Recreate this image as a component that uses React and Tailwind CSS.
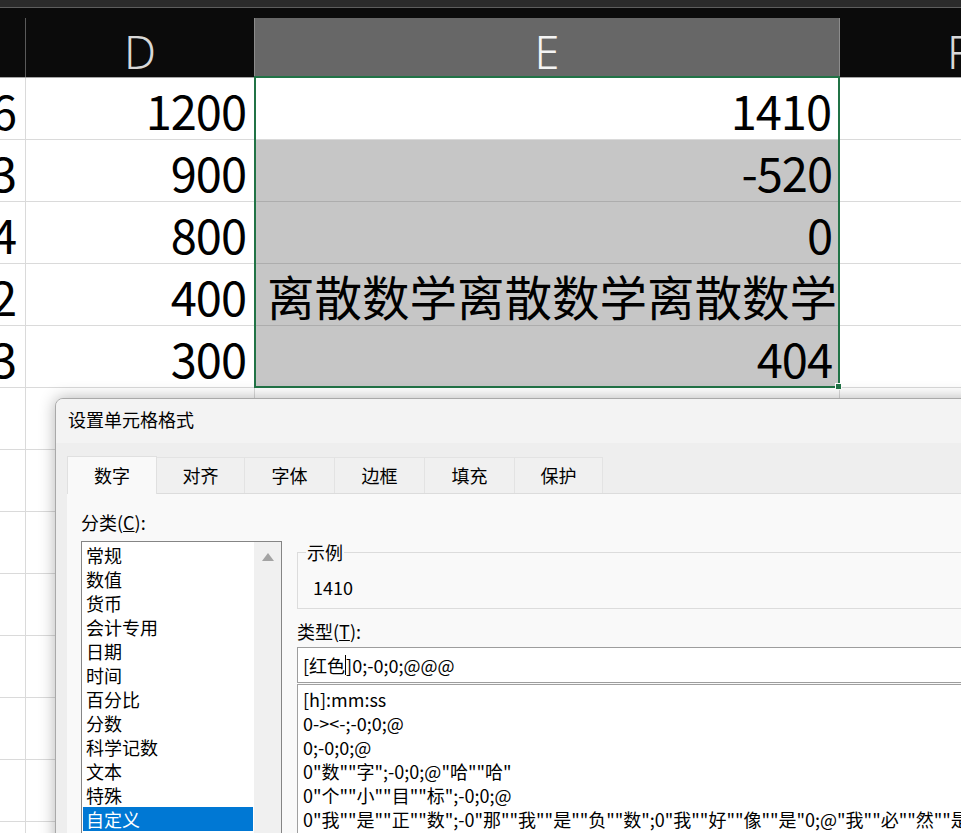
const rows = [
  { c: '6', d: '1200', e: '1410' },
  { c: '3', d: '900', e: '-520' },
  { c: '4', d: '800', e: '0' },
  { c: '2', d: '400', e: '离散数学离散数学离散数学', text: true },
  { c: '3', d: '300', e: '404' },
]

const categories = ['常规', '数值', '货币', '会计专用', '日期', '时间', '百分比', '分数', '科学记数', '文本', '特殊', '自定义']

const formats = [
  '[h]:mm:ss',
  '0-><-;-0;0;@',
  '0;-0;0;@',
  '0"数""字";-0;0;@"哈""哈"',
  '0"个""小""目""标";-0;0;@',
  '0"我""是""正""数";-0"那""我""是""负""数";0"我""好""像""是"0;@"我""必""然""是""',
]

const tabs = ['数字', '对齐', '字体', '边框', '填充', '保护']

function SheetRow({ row, index }) {
  const selected = row && index > 0
  const eText = row && row.text ? 'text-[47.5px] pr-[3px]' : 'text-[47px] tracking-[-1px] pr-[8px]'
  return (
    <div className="flex h-[62px] border-b border-[#dadada]">
      <div className="flex w-[26px] shrink-0 items-end justify-end overflow-hidden border-r border-[#dadada] pr-[9px] pb-[6px] text-[47px] leading-none tracking-[-1px]">
        {row ? row.c : ''}
      </div>
      <div className="flex w-[229px] shrink-0 items-end justify-end border-r border-[#dadada] pr-[8px] pb-[6px] text-[47px] leading-none tracking-[-1px]">
        {row ? row.d : ''}
      </div>
      <div
        className={
          selected
            ? `flex w-[585px] shrink-0 items-end justify-end overflow-hidden bg-[#c6c6c6] pb-[6px] leading-none shadow-[0_1px_0_#adadad] ${eText}`
            : `flex w-[585px] shrink-0 items-end justify-end overflow-hidden border-r border-[#dadada] pb-[6px] leading-none ${eText}`
        }
      >
        {row ? row.e : ''}
      </div>
      <div className="flex-1" />
    </div>
  )
}

export default function App() {
  return (
    <div className="relative h-[833px] w-[961px] overflow-hidden bg-white font-['Noto_Sans_CJK_SC',sans-serif] text-black">
      {/* window strip */}
      <div className="h-[7px] bg-[#2b2b2b]" />
      <div className="h-px bg-[#5e5e5e]" />
      <div className="h-[10px] bg-[#0b0b0b]" />

      {/* column headers */}
      <div className="flex h-[60px] border-b border-[#a6a6a6] bg-[#0b0b0b] font-['Noto_Sans',sans-serif] text-[45px] font-light leading-none">
        <div className="w-[26px] shrink-0 border-r border-[#5a5a5a]" />
        <div className="flex w-[229px] shrink-0 items-end justify-center border-r border-[#8c8c8c] pb-[3px] text-[#d8d8d8]">D</div>
        <div className="flex w-[585px] shrink-0 items-end justify-center border-r border-[#8c8c8c] bg-[#676767] pb-[3px] text-[#f4f4f4]">E</div>
        <div className="flex flex-1 items-end overflow-hidden pb-[3px] pl-[107px] text-[#d8d8d8]">F</div>
      </div>

      {/* cells */}
      {rows.map((row, i) => (
        <SheetRow key={i} row={row} index={i} />
      ))}
      {Array.from({ length: 8 }).map((_, i) => (
        <SheetRow key={'e' + i} />
      ))}

      {/* selection */}
      <div className="absolute left-[254px] top-[76px] h-[312px] w-[586px] border-2 border-[#217346]" />
      <div className="absolute left-[835px] top-[383px] h-[7px] w-[7px] border border-white bg-[#217346]" />

      {/* format cells dialog */}
      <div className="absolute left-[55px] top-[398px] h-[460px] w-[930px] overflow-hidden rounded-lg border border-[#a9a9a9] bg-[#eeeeee] text-[18px] leading-[24px] shadow-[0_0_16px_rgba(0,0,0,0.3)]">
        <div className="flex h-[44px] items-center bg-[#f3f3f3] pb-[4px] pl-[12px]">设置单元格格式</div>

        <div className="px-[11px] pt-[13px]">
          <div className="flex items-end border-b border-[#dcdcdc]">
            {tabs.map((t, i) =>
              i === 0 ? (
                <div key={t} className="-mb-px flex h-[38px] w-[90px] items-center justify-center border border-b-0 border-[#e0e0e0] bg-[#f9f9f9] pb-[2px]">
                  {t}
                </div>
              ) : (
                <div key={t} className={`flex h-[36px] ${i === 5 || i === 1 ? 'w-[88px]' : 'w-[90px]'} items-center justify-center border border-b-0 border-l-0 border-[#e3e3e3] bg-[#f0f0f0] pb-[2px]`}>
                  {t}
                </div>
              )
            )}
          </div>

          <div className="flex h-[400px] bg-[#f9f9f9] pl-[14px] pt-[16px]">
            <div className="w-[201px] shrink-0">
              <div>
                分类(<span className="underline">C</span>):
              </div>
              <div className="mt-[7px] flex h-[320px] border border-[#858585] bg-white">
                <div className="flex-1 p-px">
                  {categories.map((c) => (
                    <div key={c} className={c === '自定义' ? 'h-[24px] bg-[#0078d4] pl-[3px] text-white' : 'h-[24px] pl-[3px]'}>
                      {c}
                    </div>
                  ))}
                </div>
                <div className="flex w-[27px] justify-center bg-[#f0f0f0] pt-[11px]">
                  <svg width="12" height="8" viewBox="0 0 12 8">
                    <polygon points="6,0 12,8 0,8" fill="#a3a3a3" />
                  </svg>
                </div>
              </div>
            </div>

            <div className="ml-[15px] flex-1 pt-[30px]">
              <fieldset className="h-[69px] border border-[#dcdcdc]">
                <legend className="ml-[8px] px-px">示例</legend>
                <div className="mt-[11px] pl-[15px]">1410</div>
              </fieldset>
              <div className="mt-[10px]">
                类型(<span className="underline">T</span>):
              </div>
              <div className="mt-[4px] flex h-[36px] items-center border border-[#9d9d9d] bg-white pl-[5px]">
                [红色<span className="inline-block h-[20px] w-px bg-black" />]0;-0;0;@@@
              </div>
              <div className="mt-px h-[200px] whitespace-nowrap border border-[#a0a0a0] bg-white pl-[5px] pt-[2px]">
                {formats.map((f) => (
                  <div key={f} className="h-[24px]">
                    {f}
                  </div>
                ))}
              </div>
            </div>
          </div>
        </div>
      </div>
    </div>
  )
}
